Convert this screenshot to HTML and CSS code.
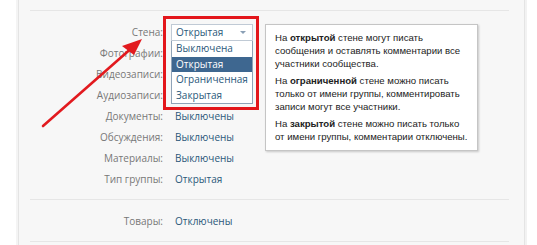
FILE: index.html
```html
<!DOCTYPE html>
<html lang="ru">
<head>
    <meta charset="UTF-8">
    <title>Настройки сообщества</title>
    <link rel="stylesheet" href="styles.css">
</head>
<body>
    <div class="page">
        <div class="panel">
            <div class="section">
                <div class="row"><span class="label">Стена:</span><span class="value">Открытая</span></div>
                <div class="row"><span class="label">Фотографии:</span><span class="value">Открытые</span></div>
                <div class="row"><span class="label">Видеозаписи:</span><span class="value">Открытые</span></div>
                <div class="row"><span class="label">Аудиозаписи:</span><span class="value">Открытые</span></div>
                <div class="row"><span class="label">Документы:</span><span class="value">Выключены</span></div>
                <div class="row"><span class="label">Обсуждения:</span><span class="value">Выключены</span></div>
                <div class="row"><span class="label">Материалы:</span><span class="value">Выключены</span></div>
                <div class="row"><span class="label">Тип группы:</span><span class="value">Открытая</span></div>
            </div>
            <div class="section">
                <div class="row"><span class="label">Товары:</span><span class="value">Отключены</span></div>
            </div>
            <div class="section last"></div>

            <div class="dropdown">
                <div class="select">Открытая<span class="caret"></span></div>
                <ul class="options">
                    <li>Выключена</li>
                    <li class="selected">Открытая</li>
                    <li>Ограниченная</li>
                    <li>Закрытая</li>
                </ul>
            </div>
            <div class="highlight"></div>

            <div class="tip">
                <p>На <b>открытой</b> стене могут писать сообщения и оставлять комментарии все участники сообщества.</p>
                <p>На <b>ограниченной</b> стене можно писать только от имени группы, комментировать записи могут все участники.</p>
                <p>На <b>закрытой</b> стене можно писать только от имени группы, комментарии отключены.</p>
            </div>
        </div>

        <svg class="arrow" width="537" height="245" viewBox="0 0 537 245">
            <line x1="43" y1="126" x2="134" y2="46" stroke="#e21a1f" stroke-width="2.6" stroke-linecap="round"/>
            <polygon points="142,39 122,46 134,55" fill="#e21a1f"/>
        </svg>
    </div>
</body>
</html>
```

FILE: styles.css
```css
body {
    margin: 0;
    background: #fff;
    font-family: "Open Sans", Arial, sans-serif;
    font-size: 10px;
}
.page {
    position: relative;
    height: 245px;
    padding-left: 18px;
    overflow: hidden;
}
.panel {
    position: relative;
    width: 505px;
    height: 245px;
    background: #f7f7f7;
    border-left: 1px solid #e4e4e4;
    border-right: 1px solid #e4e4e4;
    box-shadow: -2px 0 0 #f4f4f4, 2px 0 0 #f2f2f2;
}
.section {
    margin: 0 15px 0 11px;
    padding: 10px 0 10px;
    border-top: 1px solid #e6e6e6;
    position: relative;
    top: 10px;
}
.section.last {
    padding: 0;
}
.row {
    display: flex;
    align-items: center;
    height: 21px;
}
.label {
    width: 133px;
    text-align: right;
    color: #777;
    padding-right: 12px;
}
.value {
    color: #2b587a;
}
.dropdown {
    position: absolute;
    left: 152px;
    top: 24px;
    width: 82px;
    font-size: 10px;
}
.select {
    position: relative;
    height: 15px;
    line-height: 15px;
    padding-left: 4px;
    background: #fff;
    border: 1px solid #c0cad5;
    color: #2b587a;
}
.caret {
    position: absolute;
    right: 6px;
    top: 6px;
    border: 3px solid transparent;
    border-top: 3px solid #8a9fb5;
}
.options {
    list-style: none;
    margin: 0;
    padding: 0;
    background: #fff;
    border: 1px solid #8fa3b8;
    border-top: none;
}
.options li {
    height: 15.5px;
    line-height: 15px;
    padding-left: 4px;
    color: #2b587a;
}
.options li.selected {
    background: #3e6790;
    color: #fff;
}
.highlight {
    position: absolute;
    left: 144px;
    top: 16px;
    width: 90px;
    height: 88px;
    border: 3px solid #e3161b;
}
.tip {
    position: absolute;
    left: 246px;
    top: 24px;
    width: 194px;
    padding: 6px 8px 7px 9px;
    background: #fff;
    border: 1px solid #c5c5c5;
    box-shadow: 1px 1px 2px rgba(0, 0, 0, 0.2);
    font-family: "Liberation Sans", Arial, sans-serif;
    font-size: 9.6px;
    line-height: 13px;
    color: #222;
}
.tip p {
    margin: 0 0 4px;
}
.tip p:last-child {
    margin: 0;
}
.arrow {
    position: absolute;
    left: 0;
    top: 0;
}
```
